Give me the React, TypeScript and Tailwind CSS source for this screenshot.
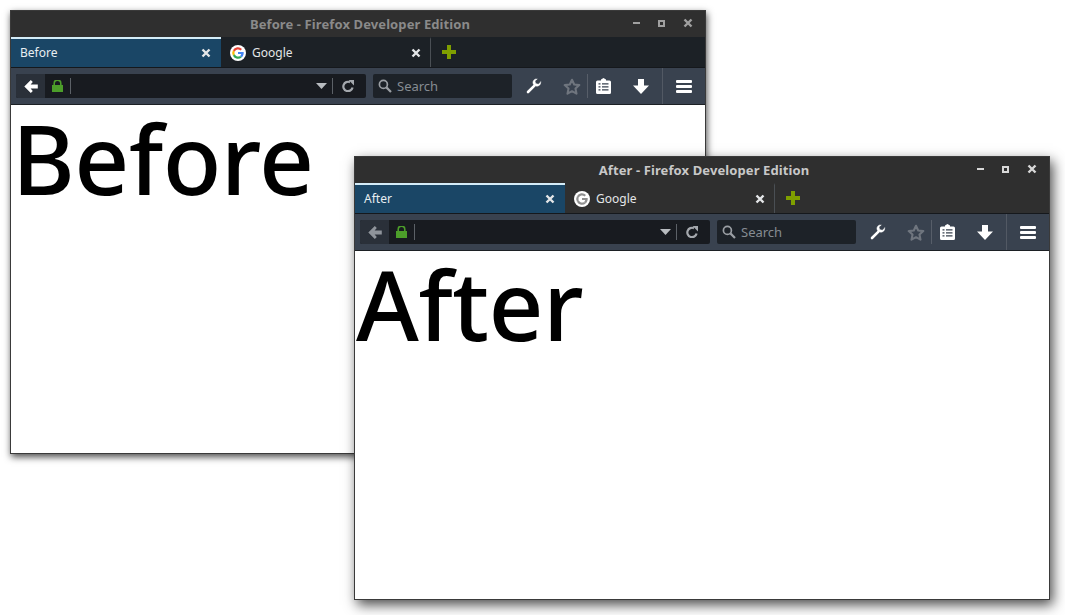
const uiFont = { fontFamily: '"Noto Sans", "Open Sans", sans-serif' };

function CloseX({ color = "#e4e6e8" }: { color?: string }) {
  return (
    <svg viewBox="0 0 10 10" className="size-[10px]" fill="none" stroke={color} strokeWidth="2.4">
      <path d="M1.5 1.5l7 7M8.5 1.5l-7 7" />
    </svg>
  );
}

function GoogleIcon({ dim }: { dim: boolean }) {
  const c = dim ? ["#8f8f8f", "#8f8f8f", "#8f8f8f", "#8f8f8f"] : ["#ea4335", "#fbbc05", "#34a853", "#4285f4"];
  return (
    <svg viewBox="0 0 16 16" className="size-4">
      <circle cx="8" cy="8" r="8" fill="#fff" />
      <path d="M2.900 5.300A5.700 5.700 0 0 1 12 4L10.500 5.500A3.600 3.600 0 0 0 4.700 6.700z" fill={c[0]} />
      <path d="M2.900 5.300a5.700 5.700 0 0 0 0 5.400l1.800-1.400a3.600 3.600 0 0 1 0-2.600z" fill={c[1]} />
      <path d="M2.900 10.700a5.700 5.700 0 0 0 8.900 1.500l-1.700-1.300a3.600 3.600 0 0 1-5.400-1.600z" fill={c[2]} />
      <path d="M13.600 6.900H8v2.200h3.200a2.700 2.700 0 0 1-1.100 1.800l1.700 1.300c1.200-1.100 1.900-2.700 1.900-4.300 0-.4 0-.7-.1-1z" fill={c[3]} />
    </svg>
  );
}

function Toolbar({ focused }: { focused: boolean }) {
  return (
    <div className="flex h-[36px] items-stretch bg-[#39424f]">
      <div className="ml-[5px] mt-[6px] flex h-[24px] w-[350px] items-stretch overflow-hidden rounded-[2px] bg-[#181b20]">
        <div className="flex w-[29px] items-center justify-center bg-[#2a3039]">
          <svg viewBox="0 0 14 13" className="h-[13px] w-[14px]" fill={focused ? "#8f949b" : "#ffffff"}>
            <path d="M6.800 0L0.300 6.500 6.800 13l2-2L6.600 8.600H13.800V4.400H6.600L8.800 2z" />
          </svg>
        </div>
        <div className="flex w-[25px] items-center pl-[7px]">
          <svg viewBox="0 0 11 12" className="h-[12px] w-[11px]" fill="#4c9e2a">
            <path d="M0 5h11v7H0z" />
            <path d="M2.200 5.500V3.400a3.300 3.300 0 0 1 6.600 0v2.100" fill="none" stroke="#4c9e2a" strokeWidth="1.600" />
          </svg>
        </div>
        <div className="my-[4px] w-px bg-[#5c6167]" />
        <div className="flex-1" />
        <div className="flex items-center pr-[5px]">
          <svg viewBox="0 0 11 6" className="h-[6px] w-[11px]" fill="#b8bcc0">
            <path d="M0 0h11L5.500 6z" />
          </svg>
        </div>
        <div className="my-[4px] w-px bg-[#5c6167]" />
        <div className="flex w-[33px] items-center justify-center pr-[4px]">
          <svg viewBox="0 0 12 12" className="size-[12px]" fill="none" stroke="#a4a8ad" strokeWidth="2.200">
            <path d="M10.600 7.600A4.700 4.700 0 1 1 8 2.200" />
            <path d="M6.600 0h5.400v5.400z" fill="#a4a8ad" stroke="none" />
          </svg>
        </div>
      </div>
      <div className="ml-[7px] mt-[6px] flex h-[24px] w-[139px] items-center rounded-[2px] bg-[#1d2228] pl-[5px]">
        <svg viewBox="0 0 14 14" className="size-[14px]" fill="none" stroke="#9b9fa4" strokeWidth="1.700">
          <circle cx="5.400" cy="5.400" r="4" />
          <path d="M8.400 8.400l4.600 4.600" strokeWidth="2.200" />
        </svg>
        <span className="ml-[5px] text-[13px] leading-none text-[#868c92]">Search</span>
      </div>
      <div className="ml-[14px] flex w-[16px] items-center">
        <svg viewBox="0 0 16 16" className="size-4" fill="none" stroke="#ffffff" strokeLinecap="round">
          <path d="M2 14L8.200 7.800" strokeWidth="2.600" />
          <path d="M14.800 3.900l-2.500 2.300-2.600-.7-.7-2.500L11.300 1a3.600 3.600 0 0 0-4.200 4.800c.7 1.700 3 2.900 5 2.200 1.800-.7 2.900-2.300 2.700-4.100z" fill="#ffffff" strokeWidth="0.400" />
        </svg>
      </div>
      <div className="ml-[21px] flex w-[18px] items-center">
        <svg viewBox="0 0 18 17" className="h-[17px] w-[18px]" fill="none" stroke="#6f757e" strokeWidth="2.100" strokeLinejoin="round">
          <path d="M9 1.800l2.200 4.700 5.100.6-3.800 3.500 1 5.100L9 13.200l-4.500 2.500 1-5.100L1.700 7.100l5.100-.6z" />
        </svg>
      </div>
      <div className="ml-[6px] my-[6px] w-px bg-[#575e69]" />
      <div className="ml-[8px] flex w-[15px] items-center">
        <svg viewBox="0 0 15 16" className="h-[16px] w-[15px]">
          <path d="M1.500 2.500H5V1.500L7.500 0 10 1.500v1h3.500A1.500 1.500 0 0 1 15 4v10.500a1.500 1.500 0 0 1-1.500 1.500H1.500A1.500 1.500 0 0 1 0 14.500V4a1.500 1.500 0 0 1 1.500-1.500z" fill="#ffffff" />
          <path d="M2.500 5.800h2M6 5.800h6.500M2.500 8.800h2M6 8.800h6.500M2.500 11.800h2M6 11.800h6.500" stroke="#39424f" strokeWidth="1.300" />
        </svg>
      </div>
      <div className="ml-[22px] flex w-[16px] items-center">
        <svg viewBox="0 0 16 15" className="h-[15px] w-[16px]" fill="#ffffff">
          <path d="M5 0h6v6.500h5L8 15 0 6.500h5z" />
        </svg>
      </div>
      <div className="ml-[13px] w-px bg-[#525964]" />
      <div className="ml-[13px] flex flex-col justify-center gap-[2px]">
        <div className="h-[3px] w-[16px] rounded-[1px] bg-white" />
        <div className="h-[3px] w-[16px] rounded-[1px] bg-white" />
        <div className="h-[3px] w-[16px] rounded-[1px] bg-white" />
      </div>
    </div>
  );
}

function BrowserWindow({ name, focused, className }: { name: string; focused: boolean; className: string }) {
  const ctl = focused ? "#d8d8d8" : "#a0a0a0";
  return (
    <div
      style={uiFont}
      className={`absolute flex h-[444px] w-[696px] flex-col border border-[#3a3a3a] bg-white ${focused ? "shadow-[3px_5px_12px_rgba(0,0,0,0.7)]" : "shadow-[1px_3px_7px_rgba(0,0,0,0.7)]"} ${className}`}
    >
      <div className="relative flex h-[26px] items-center justify-center bg-[#2f2f2f] pl-[4px]">
        <span className={`text-[13px] font-bold leading-none tracking-[0.1px] ${focused ? "text-[#c8c8c8]" : "text-[#8a8a8a]"}`}>
          {name} - Firefox Developer Edition
        </span>
        <div className="absolute right-[12px] top-[7px] flex items-center">
          <div className="mr-[18px] h-[2px] w-[7px]" style={{ background: ctl }} />
          <div className="mr-[18px] size-[7px] border-2" style={{ borderColor: ctl }} />
          <CloseX color={ctl} />
        </div>
      </div>
      <div className={`flex h-[31px] border-b border-[#15181c] ${focused ? "bg-[#2f2f2f]" : "bg-[#1c2126]"}`}>
        <div className="flex w-[210px] items-center justify-between border-t-2 border-[#d4ecf8] bg-[#1a4666] pl-[9px] pr-[10px] text-[12px] text-[#e8eef2]">
          <span>{name}</span>
          <CloseX />
        </div>
        <div className="flex w-[210px] items-center border-r border-t-2 border-r-[#4a4f54] border-t-transparent pl-[9px] pr-[9px] text-[12px] text-[#e4e6e8]">
          <GoogleIcon dim={focused} />
          <span className="ml-[6px] flex-1">Google</span>
          <CloseX />
        </div>
        <div className="ml-[11px] flex items-center">
          <svg viewBox="0 0 14 14" className="size-[14px]" fill="#7f9f00">
            <path d="M5 0h4v5h5v4H9v5H5V9H0V5h5z" />
          </svg>
        </div>
      </div>
      <Toolbar focused={focused} />
      <div className="flex-1 border-t border-[#1c2024] bg-white">
        <div className="pl-px text-[96px] font-medium leading-[106px] tracking-[-0.5px] text-black">{name}</div>
      </div>
    </div>
  );
}

export default function App() {
  return (
    <div className="relative h-[615px] w-[1065px] overflow-hidden bg-white">
      <BrowserWindow name="Before" focused={false} className="left-[10px] top-[10px]" />
      <BrowserWindow name="After" focused className="left-[354px] top-[156px]" />
    </div>
  );
}
